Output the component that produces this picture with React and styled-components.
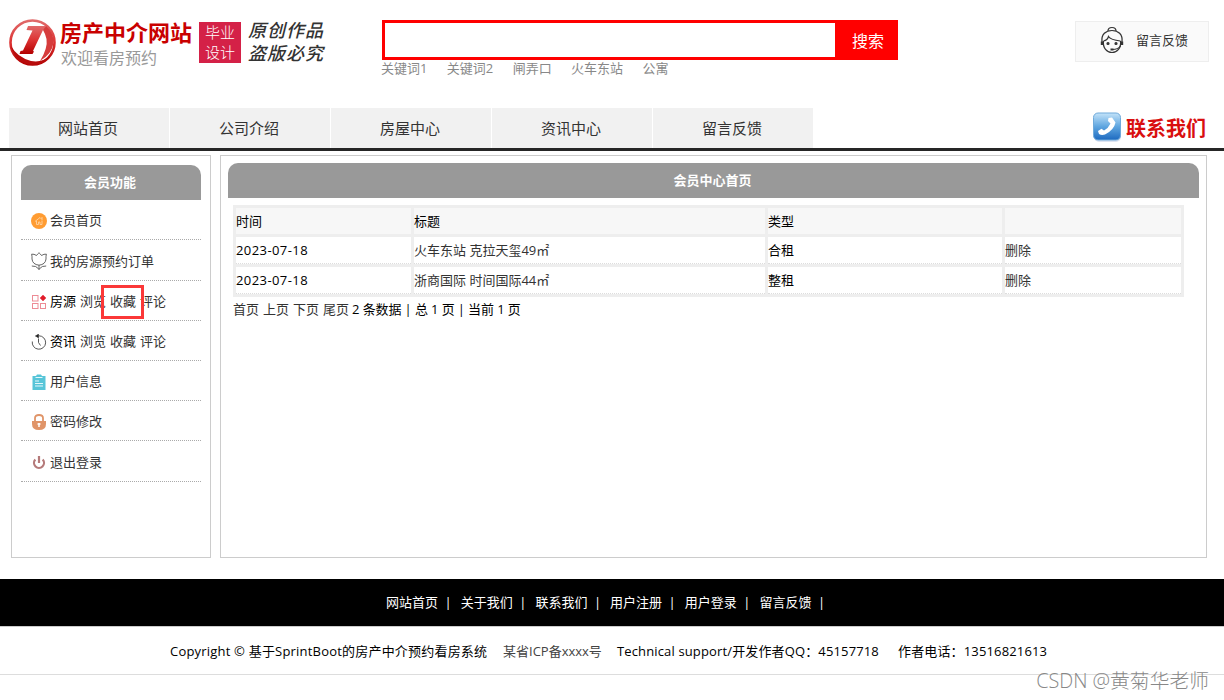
import React from 'react';
import styled, { createGlobalStyle } from 'styled-components';

const GlobalStyle = createGlobalStyle`
  * {
    box-sizing: border-box;
  }

  body {
    margin: 0;
    background: #fff;
    color: #000;
    font-family: 'Open Sans', 'Noto Sans CJK SC', sans-serif;
    font-size: 13px;
    line-height: 20px;
    white-space: nowrap;
  }

  a {
    color: #333;
    text-decoration: none;
  }
`;

const Page = styled.div`
  position: relative;
  width: 1224px;
  height: 700px;
  overflow: hidden;
`;

const Header = styled.header`
  display: flex;
  height: 108px;
  padding-left: 9px;
`;

const Brand = styled.div`
  display: flex;
  width: 372px;
  padding-top: 18px;
`;

const BrandText = styled.div`
  width: 139px;
  margin-left: 4px;
`;

const SiteName = styled.h1`
  margin: 0;
  color: #c90000;
  font-size: 22px;
  line-height: 28px;
  font-weight: 700;
`;

const Slogan = styled.p`
  margin: 0;
  padding: 2px 0 0 1px;
  color: #999;
  font-size: 16px;
  line-height: 21px;
`;

const Badge = styled.div`
  width: 42px;
  height: 41px;
  margin-top: 4px;
  background: #d42147;
  color: #fff;
  font-size: 15px;
  line-height: 20px;
  font-weight: 300;
  text-align: center;
`;

const Motto = styled.div`
  margin: 1px 0 0 7px;
  color: #333;
  font-size: 18px;
  line-height: 23px;
  font-weight: 500;
  font-style: italic;
  letter-spacing: 1px;
`;

const Search = styled.div`
  width: 517px;
  padding-top: 20px;
`;

const SearchBox = styled.div`
  display: flex;
  height: 40px;
  margin-left: 1px;
  border: 3px solid #f00;
`;

const SearchInput = styled.input`
  flex: 1;
  min-width: 0;
  padding: 0 8px;
  border: 0;
  outline: 0;
`;

const SearchButton = styled.button`
  width: 60px;
  padding: 2px 0 0 6px;
  border: 0;
  background: #f00;
  color: #fff;
  font: inherit;
  font-size: 16px;
`;

const Keywords = styled.div`
  display: flex;
  gap: 19.4px;
  line-height: 17px;

  a {
    color: #888;
  }
`;

const Feedback = styled.a`
  display: flex;
  width: 134px;
  height: 41px;
  margin: 21px 0 0 177px;
  padding: 4px 0 0 24px;
  border: 1px solid #eee;
  background: #fafafa;
  line-height: 28px;

  svg {
    margin-right: 12px;
  }
`;

const Nav = styled.nav`
  display: flex;
  gap: 1px;
  height: 43px;
  padding-left: 9px;
  border-bottom: 3px solid #262626;
`;

const NavItem = styled.a`
  width: 160px;
  padding-right: 2px;
  background: #f1f1f1;
  font-size: 15px;
  line-height: 41px;
  text-align: center;
`;

const Contact = styled.a`
  display: flex;
  margin-left: 279px;
  color: #d90f0f;
  font-size: 20px;
  line-height: 41px;
  font-weight: 700;

  svg {
    margin: 4px 4px 0 0;
  }
`;

const Main = styled.main`
  display: flex;
  gap: 9px;
  height: 428px;
  padding: 4px 0 0 11px;
`;

const Panel = styled.section`
  width: ${(props) => props.$width}px;
  height: 403px;
  padding: ${(props) => props.$pad};
  border: 1px solid #ccc;
`;

const PanelTitle = styled.h2`
  height: 35px;
  margin: 0;
  padding-right: 2px;
  border-radius: 10px 10px 0 0;
  background: #999;
  color: #fff;
  font-size: 13px;
  line-height: 35px;
  font-weight: 700;
  text-align: center;
`;

const MenuRow = styled.div`
  display: flex;
  align-items: center;
  gap: 4px;
  height: ${(props) => props.$height || 40}px;
  padding: 1px 0 0 10px;
  border-bottom: 1px dotted #aaa;

  svg {
    flex: none;
    margin: 1px -1px 0 0;
  }
`;

const Records = styled.table`
  width: 951px;
  margin: 7px 0 0 5px;
  border: 0;
  border-spacing: 3px;
  background: #eee;
  table-layout: fixed;

  th,
  td {
    height: 27px;
    padding: 0 0 1px;
    background: #fff;
    line-height: 24px;
    text-align: left;
    font-weight: 400;
  }

  th {
    height: 26px;
    background: #f7f7f7;
  }

  td {
    border-bottom: 1px dotted #ddd;
  }
`;

const DateText = styled.span`
  letter-spacing: 0.42px;
`;

const Pager = styled.div`
  display: flex;
  gap: 4px;
  margin: 2px 0 0 5px;

  span {
    margin-left: -1px;
    letter-spacing: -0.11px;
  }
`;

const FooterNav = styled.div`
  display: flex;
  height: 48px;
  padding-left: 386px;
  border-bottom: 1px solid #ccc;
  background: #000;
  color: #fff;
  line-height: 46px;
`;

const FooterItem = styled.span`
  width: 74.7px;

  a {
    margin-right: 6.5px;
    color: #fff;
  }
`;

const Copyright = styled.footer`
  display: flex;
  height: 48px;
  padding-left: 170px;
  border-bottom: 1px solid #ddd;
  line-height: 48px;
`;

const CopyrightItem = styled.span`
  width: ${(props) => props.$width}px;
  color: ${(props) => (props.$muted ? '#444' : '#000')};
  letter-spacing: ${(props) => props.$spacing || 0}px;
`;

const Highlight = styled.div`
  position: absolute;
  left: 101px;
  top: 285px;
  width: 43px;
  height: 34px;
  border: 3px solid #fb3838;
`;

const Watermark = styled.div`
  position: absolute;
  right: 15px;
  top: 667px;
  color: #888;
  font-size: 19.8px;
  line-height: 28px;
  font-weight: 300;
`;

const LogoIcon = () => (
  <svg width="47" height="49" viewBox="0 0 47 49">
    <defs>
      <linearGradient id="ring" x1="0" y1="0" x2="0" y2="1">
        <stop offset="0" stopColor="#e06a6a" />
        <stop offset="0.5" stopColor="#d33" />
        <stop offset="1" stopColor="#b30000" />
      </linearGradient>
    </defs>
    <circle cx="23.5" cy="24.5" r="22" fill="#fff" stroke="url(#ring)" strokeWidth="2.6" />
    <path d="M2 28Q5 42 19 46.500Q33 49 41 38Q33 45 22 43Q8 39 2 28Z" fill="#b80c0c" />
    <path d="M19 8H37L35.500 11.500L34 12L24 33L25 33.500L23.500 36H10.500L11.500 33L14 32.500L23.500 12.500L17.500 12Z" fill="url(#ring)" />
    <path d="M37 8Q45 15 44.500 25Q43 36 31 43Q39 30 37.500 21Q36 15 34 12Z" fill="#d63c3c" />
  </svg>
);

const SupportIcon = () => (
  <svg width="24" height="28" viewBox="0 0 24 28" fill="none" stroke="#333" strokeWidth="1.2">
    <path d="M8 5Q8 1.500 12 1.500T16 5" />
    <path d="M2 16C1 8 6 4.500 12 4.500S23 8 22 16" />
    <path d="M3.500 15C2.500 22 7 26.500 12 26.500S21.500 22 20.500 15" />
    <path d="M3.500 15C6 14.500 8 12.500 8.500 10.500C11 14 16 14.500 20.500 15" />
    <path d="M2 15.500V19M22 15.500V19" strokeWidth="2.400" />
    <path d="M20.500 20Q18 23.500 12.500 23.500" />
    <path d="M10.500 23.500H13.500" strokeWidth="2" />
    <circle cx="8" cy="17.500" r="1" fill="#333" />
    <circle cx="16" cy="17.500" r="1" fill="#333" />
  </svg>
);

const PhoneIcon = () => (
  <svg width="29" height="31" viewBox="0 0 29 31">
    <defs>
      <linearGradient id="phone" x1="0" y1="0" x2="0" y2="1">
        <stop offset="0" stopColor="#c4e3f9" />
        <stop offset="0.5" stopColor="#5fa6e0" />
        <stop offset="1" stopColor="#1d6ac0" />
      </linearGradient>
    </defs>
    <rect x="1" y="3" width="27" height="27" rx="5" fill="#dde3f0" />
    <rect x="0.500" y="1" width="27" height="27" rx="4.500" fill="url(#phone)" stroke="#6faada" />
    <path
      d="M15.500 6L19 5.500L22.500 10.500Q21 18 12 22.500Q8.500 23.500 6 22L5 19L8.500 16.800L11 18.500Q15.500 16 17.500 11.500L15 9Z"
      fill="#fff"
    />
  </svg>
);

const HomeIcon = () => (
  <svg width="16" height="16" viewBox="0 0 16 16">
    <circle cx="8" cy="8" r="8" fill="#ff9c32" />
    <path
      d="M4 8.500L9 4.500L11.500 7M5.500 8V11.500H7.500V9H9V11.500H11V7.500M11 4V6"
      fill="none"
      stroke="#ffd3a0"
      strokeWidth="0.9"
    />
  </svg>
);

const TulipIcon = () => (
  <svg width="16" height="18" viewBox="0 0 16 18" fill="none" stroke="#555" strokeWidth=".9">
    <path d="M8 .7Q6.500 2 5.500 3.500Q3 1.800 .6 2.200Q1.200 4 1 7Q1.500 12.500 8 13.200Q14.500 12.500 15 7Q14.800 4 15.400 2.200Q13 1.800 10.500 3.500Q9.500 2 8 .7Z" />
    <path d="M8 13V18M.8 14Q5 13.500 7.800 17M15.200 14Q11 13.500 8.200 17" />
  </svg>
);

const AppsIcon = () => (
  <svg width="16" height="16" viewBox="0 0 16 16" fill="none" stroke="#ed8b95">
    <rect x="1.500" y="1.500" width="5.500" height="5.500" />
    <rect x="1.500" y="9.500" width="5.500" height="5" />
    <rect x="9.500" y="9.500" width="5" height="5" />
    <path d="M12 1L15 4L12 7L9 4Z" fill="#e11d2b" stroke="#e11d2b" strokeWidth=".4" />
  </svg>
);

const ClockIcon = () => (
  <svg width="16" height="16" viewBox="0 0 16 16" fill="none" stroke="#444" strokeWidth=".9">
    <path d="M1.300 7.500A6.700 6.700 0 1 0 8 1.800" />
    <path d="M7.500 4.500V8.500L9.500 11.500" />
    <path d="M4.500 2L7.500 .3V3.700Z" fill="#111" />
  </svg>
);

const ClipboardIcon = () => (
  <svg width="16" height="16" viewBox="0 0 16 16">
    <path d="M1.500 2H5L6 .5H10L11 2H14.500V16H1.500Z" fill="#57c5d8" />
    <path d="M4.500 3.500H11.500M4 7H8M4 9.500H12M4 12H12" stroke="#e4f8fb" strokeWidth="1.100" />
  </svg>
);

const LockIcon = () => (
  <svg width="16" height="16" viewBox="0 0 16 16">
    <path d="M4 8V4Q4 1 8 1T12 4V8" fill="none" stroke="#e09468" strokeWidth="1.800" />
    <path d="M1 7H15V10Q15 16 8 16T1 10Z" fill="#e09468" />
    <path d="M8 9V13M6.500 10H9.500" stroke="#fff" strokeWidth="1.500" />
  </svg>
);

const PowerIcon = () => (
  <svg width="16" height="16" viewBox="0 0 16 16" fill="none" stroke="#b57a7a" strokeWidth="2.200">
    <path d="M4.300 5.500A5 5 0 1 0 11.700 5.500M8 2V9" />
  </svg>
);

const navItems = ['网站首页', '公司介绍', '房屋中心', '资讯中心', '留言反馈'];
const keywords = ['关键词1', '关键词2', '闸弄口', '火车东站', '公寓'];
const footerItems = ['网站首页', '关于我们', '联系我们', '用户注册', '用户登录', '留言反馈'];

const menu = [
  { Icon: HomeIcon, links: ['会员首页'], height: 40 },
  { Icon: TulipIcon, links: ['我的房源预约订单'], height: 41 },
  { Icon: AppsIcon, label: '房源', links: ['浏览', '收藏', '评论'] },
  { Icon: ClockIcon, label: '资讯', links: ['浏览', '收藏', '评论'] },
  { Icon: ClipboardIcon, links: ['用户信息'] },
  { Icon: LockIcon, links: ['密码修改'] },
  { Icon: PowerIcon, links: ['退出登录'], height: 41 },
];

const records = [
  { date: '2023-07-18', title: '火车东站 克拉天玺49㎡', type: '合租' },
  { date: '2023-07-18', title: '浙商国际 时间国际44㎡', type: '整租' },
];

export default function App() {
  return (
    <Page>
      <GlobalStyle />
      <Header>
        <Brand>
          <LogoIcon />
          <BrandText>
            <SiteName>房产中介网站</SiteName>
            <Slogan>欢迎看房预约</Slogan>
          </BrandText>
          <Badge>
            毕业
            <br />
            设计
          </Badge>
          <Motto>
            原创作品
            <br />
            盗版必究
          </Motto>
        </Brand>
        <Search>
          <SearchBox>
            <SearchInput />
            <SearchButton>搜索</SearchButton>
          </SearchBox>
          <Keywords>
            {keywords.map((word) => (
              <a key={word}>{word}</a>
            ))}
          </Keywords>
        </Search>
        <Feedback>
          <SupportIcon />
          留言反馈
        </Feedback>
      </Header>
      <Nav>
        {navItems.map((item) => (
          <NavItem key={item}>{item}</NavItem>
        ))}
        <Contact>
          <PhoneIcon />
          联系我们
        </Contact>
      </Nav>
      <Main>
        <Panel $width={200} $pad="9px">
          <PanelTitle>会员功能</PanelTitle>
          {menu.map(({ Icon, label, links, height }, i) => (
            <MenuRow key={i} $height={height}>
              <Icon />
              {label && <span>{label}</span>}
              {links.map((link) => (
                <a key={link}>{link}</a>
              ))}
            </MenuRow>
          ))}
        </Panel>
        <Panel $width={987} $pad="7px">
          <PanelTitle>会员中心首页</PanelTitle>
          <Records>
            <colgroup>
              <col width="175" />
              <col width="351" />
              <col width="234" />
              <col width="176" />
            </colgroup>
            <thead>
              <tr>
                <th>时间</th>
                <th>标题</th>
                <th>类型</th>
                <th />
              </tr>
            </thead>
            <tbody>
              {records.map((record) => (
                <tr key={record.title}>
                  <td>
                    <DateText>{record.date}</DateText>
                  </td>
                  <td>
                    <a>{record.title}</a>
                  </td>
                  <td>{record.type}</td>
                  <td>
                    <a>删除</a>
                  </td>
                </tr>
              ))}
            </tbody>
          </Records>
          <Pager>
            <a>首页</a>
            <a>上页</a>
            <a>下页</a>
            <a>尾页</a>
            <span>2 条数据 | 总 1 页 | 当前 1 页</span>
          </Pager>
        </Panel>
      </Main>
      <FooterNav>
        {footerItems.map((item) => (
          <FooterItem key={item}>
            <a>{item}</a>|
          </FooterItem>
        ))}
      </FooterNav>
      <Copyright>
        <CopyrightItem $width={333} $spacing={0.2}>
          Copyright © 基于SprintBoot的房产中介预约看房系统
        </CopyrightItem>
        <CopyrightItem $width={114} $muted>
          某省ICP备xxxx号
        </CopyrightItem>
        <CopyrightItem $width={281} $spacing={0.14}>
          Technical support/开发作者QQ：45157718
        </CopyrightItem>
        <CopyrightItem $width={150} $spacing={0.15}>
          作者电话：13516821613
        </CopyrightItem>
      </Copyright>
      <Highlight />
      <Watermark>CSDN @黄菊华老师</Watermark>
    </Page>
  );
}
